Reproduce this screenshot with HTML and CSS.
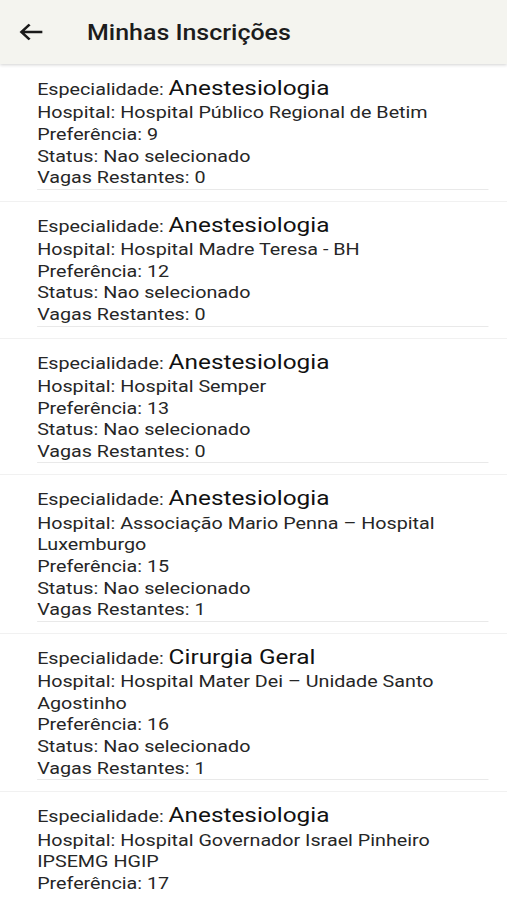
FILE: index.html
```html
<!DOCTYPE html>
<html lang="pt">
<head>
  <meta charset="UTF-8">
  <title>Minhas Inscrições</title>
  <link rel="stylesheet" href="styles.css">
</head>
<body>
  <div class="page">
    <header class="app-bar">
      <svg class="back-icon" width="22" height="20" viewBox="0 0 22 20">
        <path d="M20.5 10H2.5 M9.5 2.5L2.5 10l7 7.5" fill="none" stroke="#1a1a1a" stroke-width="2.4"/>
      </svg>
      <h1>Minhas Inscrições</h1>
    </header>

    <main class="list">
      <div class="item">
        <div class="info">
          <div class="spec">Especialidade: <span>Anestesiologia</span></div>
          <div>Hospital: Hospital Público Regional de Betim</div>
          <div>Preferência: 9</div>
          <div>Status: Nao selecionado</div>
          <div>Vagas Restantes: 0</div>
        </div>
      </div>
      <div class="item">
        <div class="info">
          <div class="spec">Especialidade: <span>Anestesiologia</span></div>
          <div>Hospital: Hospital Madre Teresa - BH</div>
          <div>Preferência: 12</div>
          <div>Status: Nao selecionado</div>
          <div>Vagas Restantes: 0</div>
        </div>
      </div>
      <div class="item">
        <div class="info">
          <div class="spec">Especialidade: <span>Anestesiologia</span></div>
          <div>Hospital: Hospital Semper</div>
          <div>Preferência: 13</div>
          <div>Status: Nao selecionado</div>
          <div>Vagas Restantes: 0</div>
        </div>
      </div>
      <div class="item">
        <div class="info">
          <div class="spec">Especialidade: <span>Anestesiologia</span></div>
          <div>Hospital: Associação Mario Penna – Hospital Luxemburgo</div>
          <div>Preferência: 15</div>
          <div>Status: Nao selecionado</div>
          <div>Vagas Restantes: 1</div>
        </div>
      </div>
      <div class="item">
        <div class="info">
          <div class="spec">Especialidade: <span>Cirurgia Geral</span></div>
          <div>Hospital: Hospital Mater Dei – Unidade Santo Agostinho</div>
          <div>Preferência: 16</div>
          <div>Status: Nao selecionado</div>
          <div>Vagas Restantes: 1</div>
        </div>
      </div>
      <div class="item">
        <div class="info">
          <div class="spec">Especialidade: <span>Anestesiologia</span></div>
          <div>Hospital: Hospital Governador Israel Pinheiro IPSEMG HGIP</div>
          <div>Preferência: 17</div>
          <div>Status: Nao selecionado</div>
          <div>Vagas Restantes: 1</div>
        </div>
      </div>
    </main>
  </div>
</body>
</html>
```

FILE: styles.css
```css
body {
  margin: 0;
  font-family: Roboto, "Noto Sans", sans-serif;
  background: #fff;
}
.page {
  width: 437px;
  height: 895px;
  overflow: hidden;
  transform: scaleX(1.1602);
  transform-origin: 0 0;
}
.app-bar {
  height: 64px;
  display: flex;
  align-items: center;
  background: #f4f4ef;
  box-shadow: 0 1px 3px rgba(0,0,0,0.18);
  position: relative;
  z-index: 1;
}
.back-icon {
  margin-left: 16px;
  margin-right: 37px;
}
h1 {
  margin: 0;
  font-size: 21.5px;
  font-weight: 500;
  color: #1c1c1c;
}
.list {
  padding-top: 1px;
}
.item {
  padding: 10px 16px 11px 32px;
  border-bottom: 1px solid #f1f1f1;
}
.info {
  font-size: 17px;
  line-height: 21.6px;
  color: #262626;
  border-bottom: 1px solid #e9e9e9;
}
.spec {
  line-height: 26.4px;
}
.spec span {
  font-size: 21px;
  color: #111;
}
```
